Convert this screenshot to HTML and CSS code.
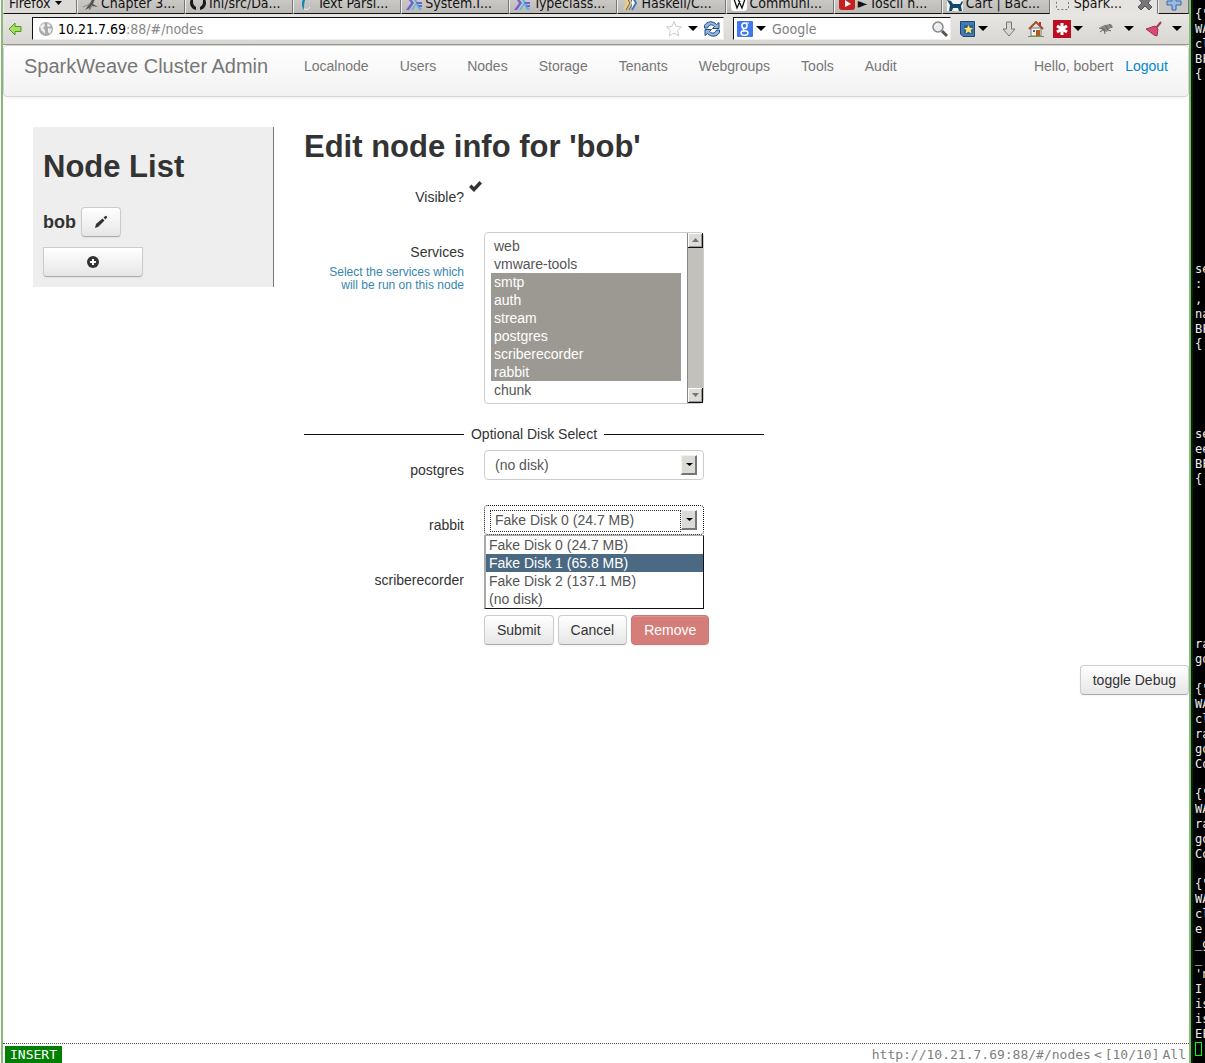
FILE: index.html
```html
<!DOCTYPE html>
<html lang="en">
<head>
<meta charset="utf-8">
<title>SparkWeave Cluster Admin</title>
<link rel="stylesheet" href="styles.css">
</head>
<body>
<div class="desktop">
<div class="browser">
  <div class="tabs">
    <button class="menu-button">Firefox<svg width="7" height="4" viewBox="0 0 7 4"><path d="M0 0h7L3.500 4z"/></svg></button>
    <div class="tab"><svg width="16" height="16" viewBox="0 0 16 16"><path d="M3 15l5-7 3-5 2 1-2 5 5 3-6-1-2 4-1-2z" fill="#555"/><path d="M1 12l7-3M7 15l3-5" stroke="#888"/></svg><span>Chapter 3...</span></div>
    <div class="tab"><svg width="16" height="16" viewBox="0 0 16 16"><path d="M6 15v-3c-2-1-3-3-3-5L3 3l3 1h4l3-1v4c0 2-1 4-3 5v3c4-1 6-4 6-7a8 8 0 1 0-16 0c0 3 2 6 6 7z" fill="#191919"/></svg><span>Ini/src/Da...</span></div>
    <div class="tab"><svg width="16" height="16" viewBox="0 0 16 16"><path d="M9 1C4 3 2 9 6 15c0-5 0-9 3-14z" fill="#1686b4"/><path d="M6 14q4 2 6-2" stroke="#eee" fill="none"/></svg><span>Text Parsi...</span></div>
    <div class="tab"><svg width="16" height="16" viewBox="0 0 16 16"><path d="M0 15l5-7-5-7h3l5 7-5 7z" fill="#7561d2"/><path d="M5 15l5-7-5-7h3l8 14h-3l-3-5-3 5z" fill="#55b9dc"/><path d="M10 7h6v2h-5zm2 3h4v2h-3z" fill="#7561d2"/></svg><span>System.I...</span></div>
    <div class="tab"><svg width="16" height="16" viewBox="0 0 16 16"><path d="M0 15l5-7-5-7h3l5 7-5 7z" fill="#7561d2"/><path d="M5 15l5-7-5-7h3l8 14h-3l-3-5-3 5z" fill="#55b9dc"/><path d="M10 7h6v2h-5zm2 3h4v2h-3z" fill="#7561d2"/></svg><span>Typeclass...</span></div>
    <div class="tab"><svg width="16" height="16" viewBox="0 0 16 16"><path d="M0 1h4l4 7-4 7H1l3-7z" fill="#e5cc83"/><path d="M4 1l4 7-4 7m3-14l4 7-4 7" stroke="#776332" fill="none"/><path d="M10 1l4 7-4 7" stroke="#4879b5" stroke-width="2" fill="#fff"/></svg><span>Haskell/C...</span></div>
    <div class="tab"><svg width="16" height="16" viewBox="0 0 16 16"><rect width="16" height="16" rx="3" fill="#fff"/><path d="M1 4h4M6 4h4M11 4h4M3 4l3 9 3-7M7 4l4 9 3-9" stroke="#111" stroke-width="1.300" fill="none"/></svg><span>Communi...</span></div>
    <div class="tab"><svg width="16" height="16" viewBox="0 0 16 16"><rect y="2" width="16" height="13" rx="3" fill="#c51f20"/><path d="M6 5l6 4-6 3z" fill="#fff"/></svg><span>► Ioscil h...</span></div>
    <div class="tab"><svg width="16" height="16" viewBox="0 0 16 16"><rect y="2" width="16" height="14" fill="#f4f4f4"/><path d="M0 5l4 1 2 3h7l2-3 1 1-2 4 1 5h-3l-1-3H6l-1 3H2l1-6z" fill="#114969"/></svg><span>Cart | Bac...</span></div>
    <div class="tab tab-current"><svg width="16" height="16" viewBox="0 0 16 16"><rect x="1.500" y="1.500" width="12" height="13" rx="1" fill="none" stroke="#777" stroke-dasharray="2 2"/></svg><span>Spark...</span><svg class="close" width="16" height="16" viewBox="0 0 16 16"><path d="M1 3l3-2 4 4 4-4 3 2-4 5 4 4-3 3-4-4-4 4-3-3 4-4z" fill="#777" stroke="#555"/></svg></div>
    <button class="new-tab" aria-label="New tab"><svg width="16" height="16" viewBox="0 0 16 16"><path d="M6 1h4v5h5v4h-5v5H6v-5H1V6h5z" fill="#98b9e5" stroke="#356ba8"/></svg></button>
  </div>
  <div class="toolbar">
    <button class="icon-button" aria-label="Back"><svg width="14" height="14" viewBox="0 0 14 14"><path d="M1 7l6-6v3.500h6v5H7V13z" fill="#a8dc62" stroke="#4c9a20"/></svg></button>
    <div class="field address">
      <svg width="14" height="14" viewBox="1 1 14 14"><circle cx="8" cy="8" r="7" fill="#aaa"/><path d="M2 5l4-3 1 3-2 2 2 2v4L3 9zM10 2l3 3-3 1-1-2zM10 7l4 1-2 5-2-2z" fill="#eee"/></svg>
      <a class="url" href="#/nodes"><b>10.21.7.69</b>:88/#/nodes</a>
      <svg width="18" height="18" viewBox="0 0 18 18"><path d="M9 1.500l2.200 5 5.300.5-4 3.500 1.200 5.500L9 13l-4.700 3 1.200-5.500-4-3.500 5.300-.5z" fill="#fff" stroke="#c9c9c9"/></svg>
      <svg width="10" height="5" viewBox="0 0 10 5"><path d="M0 0h10L5 5z"/></svg>
      <svg class="reload" width="18" height="18" viewBox="0 0 18 18"><path d="M1.500 8V5.500C4 1 10 .5 13.500 4.500l2.500-2V8.500h-6.500l2-2C9 4 6 4.500 4.500 8zM16.500 10v2.500C14 17 8 17.500 4.500 13.500l-2.500 2V9.500h6.500l-2 2C9 14 12 13.500 13.500 10z" fill="#8fb4dc" stroke="#204a80"/></svg>
    </div>
    <div class="field search">
      <svg width="16" height="16" viewBox="0 0 16 16"><rect width="16" height="16" rx="1" fill="#3f78f0"/><path d="M12 2H9" stroke="#fff" fill="none"/><ellipse cx="7.500" cy="4.800" rx="2.600" ry="2.800" fill="none" stroke="#fff" stroke-width="1.500"/><path d="M7 8q-2 1 1 2" fill="none" stroke="#fff" stroke-width="1.500"/><ellipse cx="7.500" cy="12" rx="3.500" ry="2.300" fill="none" stroke="#fff" stroke-width="1.500"/></svg>
      <svg width="10" height="5" viewBox="0 0 10 5"><path d="M0 0h10L5 5z"/></svg>
      <input type="text" placeholder="Google" aria-label="Search">
      <svg width="18" height="18" viewBox="0 0 18 18"><path d="M11 11l5 5" stroke="#555" stroke-width="3"/><circle cx="7" cy="7" r="5" fill="#e6edf1" stroke="#888" stroke-width="1.500"/><path d="M4 7q0-3 3-3" stroke="#fff" fill="none"/></svg>
    </div>
    <div class="tools">
      <svg width="16" height="16" viewBox="0 0 16 16"><path d="M.5.500h14v15H3L.500 13z" fill="#4479b7" stroke="#1c4778"/><rect x="4" y="4" width="9" height="9" fill="#31608f"/><path d="M8.500 4l1.400 3H13l-2.300 2.200.800 3.300-3-1.700-3 1.700.8-3.300L4 7h3.100z" fill="#fbe26a"/></svg>
      <svg class="caret" width="10" height="5" viewBox="0 0 10 5"><path d="M0 0h10L5 5z"/></svg>
      <svg class="download" width="14" height="16" viewBox="0 0 14 16"><path d="M4.500 1h5v7H13l-6 7-6-7h3.500z" fill="#d6d6d3" stroke="#777"/></svg>
      <svg class="home" width="16" height="16" viewBox="0 0 16 16"><path d="M3 7h10v8H3z" fill="#f8f1e8" stroke="#777"/><path d="M12 1v4" stroke="#a33" stroke-width="2"/><path d="M1 8l7-7 7 7" fill="none" stroke="#a04f31" stroke-width="2"/><path d="M5 9h2v2H5z" fill="#559"/><path d="M8 9h4v6H8z" fill="#b05b27"/><path d="M0 15.500h16" stroke="#6f9c37"/></svg>
      <svg class="lastpass" width="18" height="18" viewBox="0 0 18 18"><rect width="18" height="18" fill="#bd0c22"/><path d="M9 3v12M4 6l10 6M14 6L4 12" stroke="#fff" stroke-width="3"/></svg>
      <svg class="caret" width="10" height="5" viewBox="0 0 10 5"><path d="M0 0h10L5 5z"/></svg>
      <svg class="fly" width="18" height="16" viewBox="0 0 18 16"><path d="M3 6l5-2 6-1 2 3-4 2-2 3-4-1-1-2z" fill="#888"/><path d="M3 11l4-3 1 5M8 4l3 5 3 1M2 7l4 1m6-5l3 4" stroke="#666" fill="none"/></svg>
      <svg class="caret caret-far" width="10" height="5" viewBox="0 0 10 5"><path d="M0 0h10L5 5z"/></svg>
      <svg class="broom" width="18" height="16" viewBox="0 0 18 16"><path d="M11 7l5-6" stroke="#a23b5b" stroke-width="2"/><path d="M1 8l9-3 3 3-1 7-3-1-4-3z" fill="#d34c7b" stroke="#a83059"/></svg>
      <svg class="caret caret-far" width="10" height="5" viewBox="0 0 10 5"><path d="M0 0h10L5 5z"/></svg>
    </div>
  </div>

  <header class="navbar">
    <a class="brand" href="#/">SparkWeave Cluster Admin</a>
    <nav class="nav">
      <a href="#/localnode">Localnode</a><a href="#/users">Users</a><a href="#/nodes">Nodes</a><a href="#/storage">Storage</a><a href="#/tenants">Tenants</a><a href="#/webgroups">Webgroups</a><a href="#/tools">Tools</a><a href="#/audit">Audit</a>
    </nav>
    <p class="session">Hello, bobert <a href="#/logout">Logout</a></p>
  </header>

  <main class="page">
    <aside class="sidebar">
      <h1>Node List</h1>
      <div class="node"><h4>bob</h4><button class="btn btn-edit" aria-label="Edit bob"><svg width="14" height="14" viewBox="0 0 14 14"><path d="M1 13l1-4 6.500-5.500 2 2L4 12zM9.500 2.500L11 1.200q1-.7 1.700 0t0 1.700L11.500 4.500z" fill="#333"/></svg></button></div>
      <button class="btn btn-add" aria-label="Add node"><svg width="12" height="12" viewBox="0 0 12 12"><circle cx="6" cy="6" r="6" fill="#333"/><path d="M6 3v6M3 6h6" stroke="#fff" stroke-width="2"/></svg></button>
    </aside>
    <section class="editor">
      <h1>Edit node info for 'bob'</h1>
      <form class="form">
        <div class="row visible-row">
          <span class="label">Visible?</span>
          <svg class="check" role="img" aria-label="yes" width="13" height="11" viewBox="0 0 13 11"><path d="M0 6l2.500-2.500L5 6l5.500-6L13 2.500 5 11z" fill="#333"/></svg>
        </div>
        <div class="row services-row">
          <label class="label" for="services">Services <small>Select the services which will be run on this node</small></label>
          <div class="listbox">
            <select class="list" id="services" multiple size="9">
              <option>web</option><option>vmware-tools</option><option selected>smtp</option><option selected>auth</option><option selected>stream</option><option selected>postgres</option><option selected>scriberecorder</option><option selected>rabbit</option><option>chunk</option>
            </select>
            <div class="scrollbar" aria-hidden="true">
              <span><svg width="7" height="4" viewBox="0 0 7 4"><path d="M0 4h7L3.500 0z"/></svg></span>
              <span><svg width="7" height="4" viewBox="0 0 7 4"><path d="M0 0h7L3.500 4z"/></svg></span>
            </div>
          </div>
        </div>
        <div class="divider"><span>Optional Disk Select</span></div>
        <div class="row disk-row">
          <label class="label" for="postgres">postgres</label>
          <div class="combo"><select id="postgres"><option>(no disk)</option></select></div>
        </div>
        <div class="row disk-row">
          <label class="label" for="rabbit">rabbit</label>
          <div class="combo combo-open">
            <select id="rabbit"><option>Fake Disk 0 (24.7 MB)</option></select>
            <ul class="popup" role="listbox" aria-label="rabbit">
              <li role="option">Fake Disk 0 (24.7 MB)</li>
              <li role="option" class="active" aria-selected="true">Fake Disk 1 (65.8 MB)</li>
              <li role="option">Fake Disk 2 (137.1 MB)</li>
              <li role="option">(no disk)</li>
            </ul>
          </div>
        </div>
        <div class="row disk-row">
          <label class="label" for="scriberecorder">scriberecorder</label>
          <div class="combo"><select id="scriberecorder"><option></option></select></div>
        </div>
        <div class="actions">
          <button class="btn" type="submit">Submit</button>
          <button class="btn" type="button">Cancel</button>
          <button class="btn btn-danger" type="button">Remove</button>
        </div>
      </form>
    </section>
  </main>
  <div class="debug"><button class="btn">toggle Debug</button></div>
  <footer class="status">
    <span class="mode">INSERT</span>
    <span class="location">http://10.21.7.69:88/#/nodes</span>
    <span>&lt;</span>
    <span class="position">[10/10]</span>
    <span>All</span>
  </footer>
</div>
<pre class="terminal">{"
WA
cl
BF
{












se
:
,
na
BF
{





se
ee
BF
{










ra
go

{"
WA
cl
ra
go
Co

{"
WA
ra
go
Co

{"
WA
cl
e
_g
_
'n
I
is
is
EF
<span class="cursor"></span></pre>
</div>
</body>
</html>
```
FILE: styles.css
```css
* { box-sizing: border-box; }
body {
  margin: 0;
  background: #fff;
  color: #333;
  font: 14px/20px "Liberation Sans", Arial, sans-serif;
}
button, input, select { font: inherit; color: inherit; margin: 0; }
button { cursor: pointer; }
a { text-decoration: none; }
svg { display: block; flex: none; }
h1, h4, p, ul { margin: 0; padding: 0; }

.desktop {
  display: grid;
  grid-template-columns: minmax(0, 1fr) 14px;
  height: 100vh;
  overflow: hidden;
}
.browser {
  display: flex;
  flex-direction: column;
  margin-left: 1px;
  border: solid #8ab879;
  border-width: 0 2px;
}

/* browser tabs */
.tabs {
  display: flex;
  align-items: flex-end;
  height: 14px;
  overflow: hidden;
  background: #bbb9b5;
  color: #111;
  font: 14px/18px "DejaVu Sans Condensed", "DejaVu Sans", sans-serif;
}
.menu-button, .tab, .new-tab {
  display: flex;
  align-items: center;
  height: 22px;
  padding: 0 4px;
  border: solid #777;
  border-width: 0 1px 1px 0;
  border-bottom-color: #111;
  border-left: 1px solid #eee;
}
.menu-button { width: 74px; gap: 4px; padding-left: 5px; background: #dddbd7; white-space: nowrap; }
.tab { flex: 1; gap: 3px; min-width: 0; background: linear-gradient(#d4d2cf, #bbb9b5); white-space: nowrap; overflow: hidden; }
.tab-current { background: #e6e4e1; border-bottom-color: #e6e4e1; }
.tab .close { margin-left: auto; }
.new-tab { width: 31px; padding-left: 7px; background: #c9c7c3; }

/* address bar */
.toolbar {
  display: flex;
  align-items: center;
  height: 31px;
  padding: 0 7px 1px 5px;
  background: linear-gradient(#e8e6e3, #d9d7d2);
  border-bottom: 1px solid #99978f;
  font: 14px/18px "DejaVu Sans Condensed", "DejaVu Sans", sans-serif;
}
.icon-button { padding: 0; border: 0; background: none; }
.field {
  display: flex;
  align-items: center;
  height: 23px;
  background: #fff;
  border: 1px solid #eee;
  border-top-color: #111;
  border-left-color: #111;
}
.address { flex: 1; gap: 5px; margin-left: 10px; padding: 0 2px 0 6px; }
.url { flex: 1; color: #888; }
.url b { color: #000; font-weight: normal; }
.search { width: 218px; gap: 3px; margin-left: 9px; padding: 0 1px 0 3px; }
.search input { flex: 1; min-width: 0; padding: 0 0 0 3px; border: 0; background: none; outline: 0; }
.search input::placeholder { color: #808080; opacity: 1; }
.tools { display: flex; align-items: center; margin-left: 9px; }
.caret { margin-left: 2px; }
.download { margin-left: 14px; }
.home { margin-left: 12px; }
.lastpass { margin-left: 9px; }
.fly { margin-left: 14px; }
.caret-far { margin-left: 9px; }
.broom { margin-left: 11px; }

/* application header */
.navbar {
  display: flex;
  height: 52px;
  padding: 10px 20px 0;
  background: linear-gradient(#fff, #f2f2f2);
  border: 1px solid #d4d4d4;
  border-radius: 4px;
  box-shadow: 0 1px 4px rgba(0, 0, 0, .06);
  color: #777;
}
.brand { width: 265px; color: #777; font-size: 20px; white-space: nowrap; }
.nav { display: flex; padding-left: 15px; gap: 31px; }
.nav a { color: #777; }
.session { margin-left: auto; }
.session a { margin-left: 8px; color: #08c; }

.page { display: flex; align-items: flex-start; gap: 30px; padding: 30px 30px 0; }
h1 { font-size: 31px; line-height: 40px; }
.sidebar {
  width: 241px;
  height: 160px;
  padding: 20px 10px 10px;
  background: #eee;
  border-right: 1px solid #777;
}
.node { display: flex; align-items: center; gap: 5px; margin: 20px 0 10px; }
h4 { font-size: 18px; line-height: 20px; }

.btn {
  height: 30px;
  padding: 4px 12px;
  border: 1px solid #ccc;
  border-bottom-color: #aaa;
  border-radius: 4px;
  background: linear-gradient(#fff, #e6e6e6);
  box-shadow: inset 0 1px 0 rgba(255, 255, 255, .2), 0 1px 2px rgba(0, 0, 0, .05);
  line-height: 20px;
  white-space: nowrap;
}
.btn svg { margin: auto; }
.btn-edit { width: 40px; }
.btn-add { display: block; width: 100px; border-radius: 0 0 4px 4px; }
.btn-danger { color: #fff; background: #d47d79; border-color: #d07774; }

/* node form */
.editor { flex: 1; max-width: 460px; }
.row { display: flex; align-items: flex-start; gap: 20px; }
.label { width: 160px; padding-top: 10px; text-align: right; }
.visible-row { gap: 5px; height: 55px; margin-top: 10px; }
.check { margin-top: 4px; }
.label small { display: block; padding: 4px 0 0 20px; color: #3a87ad; font-size: 12px; line-height: 13px; }
.listbox { position: relative; width: 220px; }
.list {
  display: block;
  width: 100%;
  height: 172px;
  padding: 4px 22px 4px 6px;
  border: 1px solid #ccc;
  border-radius: 4px;
  background: #fff;
  color: #555;
}
.list option { height: 18px; min-height: 18px; padding: 1px 3px 0; line-height: 18px; }
.list option:checked {
  background: linear-gradient(#9b9992, #9b9992);
  -webkit-text-fill-color: #fff;
}
.scrollbar {
  position: absolute;
  top: 1px;
  right: 1px;
  bottom: 1px;
  display: flex;
  flex-direction: column;
  justify-content: space-between;
  width: 16px;
  background: #c3c1bc;
  border-left: 1px solid #888;
}
.scrollbar span {
  display: grid;
  place-items: center;
  height: 15px;
  background: #dedcd8;
  border: solid #111;
  border-width: 0 1px 1px 0;
  box-shadow: inset 1px 1px #fff, inset -1px -1px #999;
}
.scrollbar svg { fill: #777; }
.divider { display: flex; align-items: center; gap: 7px; margin: 20px 0 6px; }
.divider::before, .divider::after { content: ""; flex: 1; height: 1px; background: #111; }
.disk-row { height: 55px; }
.combo { position: relative; width: 220px; }
.combo select {
  display: block;
  width: 100%;
  height: 30px;
  padding: 4px 24px 4px 10px;
  appearance: none;
  border: 1px solid #ccc;
  border-radius: 4px;
  color: #555;
  background: #fff url("data:image/svg+xml,%3Csvg xmlns='http://www.w3.org/2000/svg' width='16' height='20'%3E%3Cpath d='M0 0h16v20H0z' fill='%23777'/%3E%3Cpath d='M0 0h16l-1 1v18H0z' fill='%23f2f2ef'/%3E%3Cpath d='M1 1h13v17H1z' fill='%23dddbd6'/%3E%3Cpath d='M15 1v18H1' fill='none' stroke='%23777' stroke-width='2'/%3E%3Cpath d='M5 8h7L8.500 11z'/%3E%3C/svg%3E") right 6px center no-repeat;
}
.combo-open select { border: 1px dotted #111; }
.combo-open::after {
  content: "";
  position: absolute;
  top: 5px;
  left: 6px;
  right: 23px;
  height: 20px;
  border: 1px dotted #333;
  pointer-events: none;
}
.popup {
  position: absolute;
  z-index: 1;
  top: 30px;
  left: 0;
  width: 100%;
  list-style: none;
  background: #fff;
  border: 1px solid #111;
  border-top-color: #aaa;
  border-left: 2px solid #aaa;
  color: #555;
  line-height: 18px;
}
.popup li { padding-left: 3px; }
.popup .active { background: #4b6983; color: #fff; }
.actions { display: flex; gap: 4px; padding-left: 180px; }
.debug { display: flex; justify-content: flex-end; margin-top: 20px; }

/* editor status line and terminal */
.status {
  display: flex;
  align-items: center;
  gap: 3px;
  height: 20px;
  margin-top: auto;
  padding: 2px 3px 0 2px;
  border-top: 1px dotted #555;
  color: #808080;
  font: 13px/17px "DejaVu Sans Mono", monospace;
}
.mode { padding: 0 5px; background: #008000; color: #fff; }
.location { margin-left: auto; }
.terminal {
  margin: 0;
  padding: 7px 0 0 2px;
  overflow: hidden;
  background: #000;
  border-left: 2px solid #002800;
  color: #eee;
  font: 12px/15px "DejaVu Sans Mono", monospace;
}
.cursor { display: inline-block; width: 7px; height: 14px; border: 1px solid #0f0; vertical-align: top; }
```
